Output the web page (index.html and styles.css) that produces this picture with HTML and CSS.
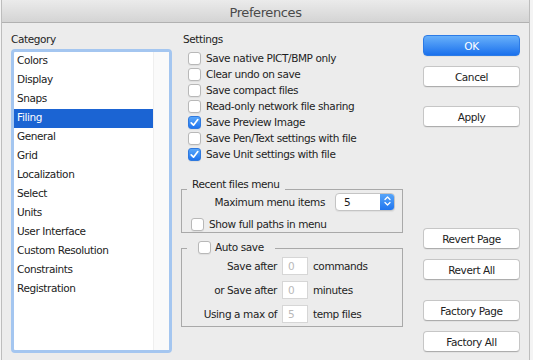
FILE: index.html
```html
<!DOCTYPE html>
<html lang="en">

<head>
  <meta charset="utf-8">
  <meta name="viewport" content="width=device-width, initial-scale=1">
  <title>Preferences</title>
  <link rel="stylesheet" href="styles.css">
</head>

<body>
  <div class="window">
    <div class="titlebar">Preferences</div>

    <div class="content">
      <div class="category-col">
        <div class="label">Category</div>
        <div class="listbox">
          <ul class="list">
            <li>Colors</li>
            <li>Display</li>
            <li>Snaps</li>
            <li class="selected">Filing</li>
            <li>General</li>
            <li>Grid</li>
            <li>Localization</li>
            <li>Select</li>
            <li>Units</li>
            <li>User Interface</li>
            <li>Custom Resolution</li>
            <li>Constraints</li>
            <li>Registration</li>
          </ul>
          <div class="scrolltrack"></div>
        </div>
      </div>

      <div class="settings-col">
        <div class="label settings-label">Settings</div>
        <div class="checks">
          <label class="check"><span class="box"></span>Save native PICT/BMP only</label>
          <label class="check"><span class="box"></span>Clear undo on save</label>
          <label class="check"><span class="box"></span>Save compact files</label>
          <label class="check"><span class="box"></span>Read-only network file sharing</label>
          <label class="check">
            <span class="box on"><svg viewBox="0 0 13 13" width="13" height="13"><path d="M3.2 6.9 L5.5 9.2 L9.8 3.6" /></svg></span>Save Preview Image
          </label>
          <label class="check"><span class="box"></span>Save Pen/Text settings with file</label>
          <label class="check">
            <span class="box on"><svg viewBox="0 0 13 13" width="13" height="13"><path d="M3.2 6.9 L5.5 9.2 L9.8 3.6" /></svg></span>Save Unit settings with file
          </label>
        </div>

        <div class="group recent">
          <div class="group-title">Recent files menu</div>
          <div class="field-row">
            <span>Maximum menu items</span>
            <div class="popup">
              <span class="popup-value">5</span>
              <span class="stepper">
                <svg viewBox="0 0 15 16" width="15" height="16">
                  <path d="M5 6.5 L7.5 4 L10 6.5 M5 9.5 L7.5 12 L10 9.5" />
                </svg>
              </span>
            </div>
          </div>
          <label class="check paths"><span class="box"></span>Show full paths in menu</label>
        </div>

        <div class="group autosave">
          <div class="group-title with-check">
            <label class="check"><span class="box"></span>Auto save</label>
          </div>
          <div class="save-row">
            <span class="row-label">Save after</span>
            <span class="num">0</span>
            <span class="unit">commands</span>
          </div>
          <div class="save-row">
            <span class="row-label">or Save after</span>
            <span class="num">0</span>
            <span class="unit">minutes</span>
          </div>
          <div class="save-row">
            <span class="row-label">Using a max of</span>
            <span class="num">5</span>
            <span class="unit">temp files</span>
          </div>
        </div>
      </div>

      <div class="button-col">
        <div class="btn-group">
          <button type="button" class="btn primary">OK</button>
          <button type="button" class="btn">Cancel</button>
        </div>
        <div class="btn-group apply">
          <button type="button" class="btn">Apply</button>
        </div>
        <div class="btn-group revert">
          <button type="button" class="btn">Revert Page</button>
          <button type="button" class="btn">Revert All</button>
        </div>
        <div class="btn-group factory">
          <button type="button" class="btn">Factory Page</button>
          <button type="button" class="btn">Factory All</button>
        </div>
      </div>
    </div>
  </div>
</body>

</html>
```

FILE: styles.css
```css
* {
  margin: 0;
  padding: 0;
  box-sizing: border-box;
}

body {
  font-family: 'DejaVu Sans', sans-serif;
  font-size: 10.5px;
  letter-spacing: -0.4px;
  color: #1e1e1e;
  background-color: #f4f4f4;
}

.window {
  width: 529px;
  height: 360px;
  margin-left: 1px;
  background-color: #ececec;
  border-left: 1px solid #bdbdbd;
  border-right: 1px solid #bdbdbd;
}

.titlebar {
  height: 23px;
  padding-top: 3px;
  line-height: 19px;
  font-size: 13px;
  text-align: center;
  color: #4a4a4a;
  background: linear-gradient(#ebebeb, #d4d4d4);
  border-bottom: 1px solid #b1b1b1;
}

.content {
  display: flex;
  padding: 8px 0 0 9px;
}

.label {
  line-height: 16px;
}

/* category list */

.category-col {
  width: 161px;
}

.listbox {
  display: flex;
  height: 304px;
  margin-top: 2px;
  background-color: white;
  border: 3px solid #a4c6f0;
  border-radius: 4px;
}

.list {
  width: 139px;
  list-style: none;
}

.list li {
  height: 19px;
  line-height: 17px;
  padding-left: 3px;
  color: #222;
}

.list li.selected {
  background-color: #1b64d3;
  color: white;
}

.scrolltrack {
  width: 16px;
  background-color: #fafafa;
  border-left: 1px solid #efefef;
}

/* settings */

.settings-col {
  width: 222px;
  margin-left: 9px;
}

.settings-label {
  padding-left: 2px;
}

.checks {
  margin-top: 3px;
}

.check {
  display: flex;
  align-items: center;
  gap: 5px;
  height: 16px;
  line-height: 16px;
  padding-left: 7px;
}

.box {
  display: block;
  width: 13px;
  height: 13px;
  flex: none;
  background-color: white;
  border: 1px solid #b8b8b8;
  border-radius: 3px;
  box-shadow: 0 1px 1px rgba(0, 0, 0, 0.06);
}

.box.on {
  background: linear-gradient(#58a6fa, #1f74ee);
  border-color: #2f79de;
}

.box svg {
  display: block;
  margin: -1px 0 0 -1px;
}

.box svg path {
  fill: none;
  stroke: white;
  stroke-width: 1.7;
  stroke-linecap: round;
  stroke-linejoin: round;
}

.group {
  border: 1px solid #a9a9a9;
}

.group-title {
  width: fit-content;
  margin: -14px 0 0 5px;
  padding: 0 5px;
  line-height: 16px;
  background-color: #ececec;
}

.recent {
  margin-top: 27px;
}

.field-row {
  display: flex;
  justify-content: flex-end;
  align-items: center;
  gap: 10px;
  height: 18px;
  margin-top: 1px;
  padding-right: 7px;
}

.popup {
  display: flex;
  width: 60px;
  height: 18px;
  background-color: white;
  border: 1px solid #c4c4c4;
  border-radius: 4px;
  box-shadow: 0 1px 1px rgba(0, 0, 0, 0.06);
  overflow: hidden;
}

.popup-value {
  flex: 1;
  padding-left: 8px;
  line-height: 16px;
}

.stepper {
  width: 15px;
  margin: -1px -1px -1px 0;
  background: linear-gradient(#5aa8fa, #1d72ee);
}

.stepper svg {
  display: block;
}

.stepper svg path {
  fill: none;
  stroke: white;
  stroke-width: 1.3;
  stroke-linecap: round;
  stroke-linejoin: round;
}

.check.paths {
  margin-top: 5px;
  padding-left: 9px;
}

.autosave {
  margin-top: 15px;
  padding-bottom: 3px;
}

.group-title.with-check {
  margin-top: -10px;
  padding: 0 11px;
}

.group-title.with-check .check {
  padding-left: 0;
  gap: 4px;
}

.save-row {
  display: flex;
  align-items: center;
  height: 18px;
  margin-top: 6px;
}

.autosave .group-title + .save-row {
  margin-top: 2px;
}

.row-label {
  width: 95px;
  text-align: right;
}

.num {
  width: 26px;
  height: 18px;
  margin-left: 5px;
  padding-left: 5px;
  line-height: 16px;
  color: #b9b9b9;
  background-color: white;
  border: 1px solid #d6d6d6;
}

.unit {
  margin-left: 5px;
}

/* buttons */

.button-col {
  width: 97px;
  margin-left: 20px;
  padding-top: 4px;
}

.btn-group {
  display: flex;
  flex-direction: column;
  gap: 10px;
}

.btn-group.apply {
  margin-top: 19px;
}

.btn-group.revert {
  margin-top: 101px;
}

.btn-group.factory {
  margin-top: 20px;
}

.btn {
  height: 21px;
  font-family: inherit;
  font-size: inherit;
  letter-spacing: inherit;
  color: #222;
  background-color: white;
  border: 1px solid #c6c6c6;
  border-bottom-color: #adadad;
  border-radius: 4px;
  box-shadow: 0 1px 0 rgba(0, 0, 0, 0.04);
}

.btn.primary {
  color: white;
  background: linear-gradient(#68b0fa, #1b71ed);
  border-color: #2c7be6;
}
```
